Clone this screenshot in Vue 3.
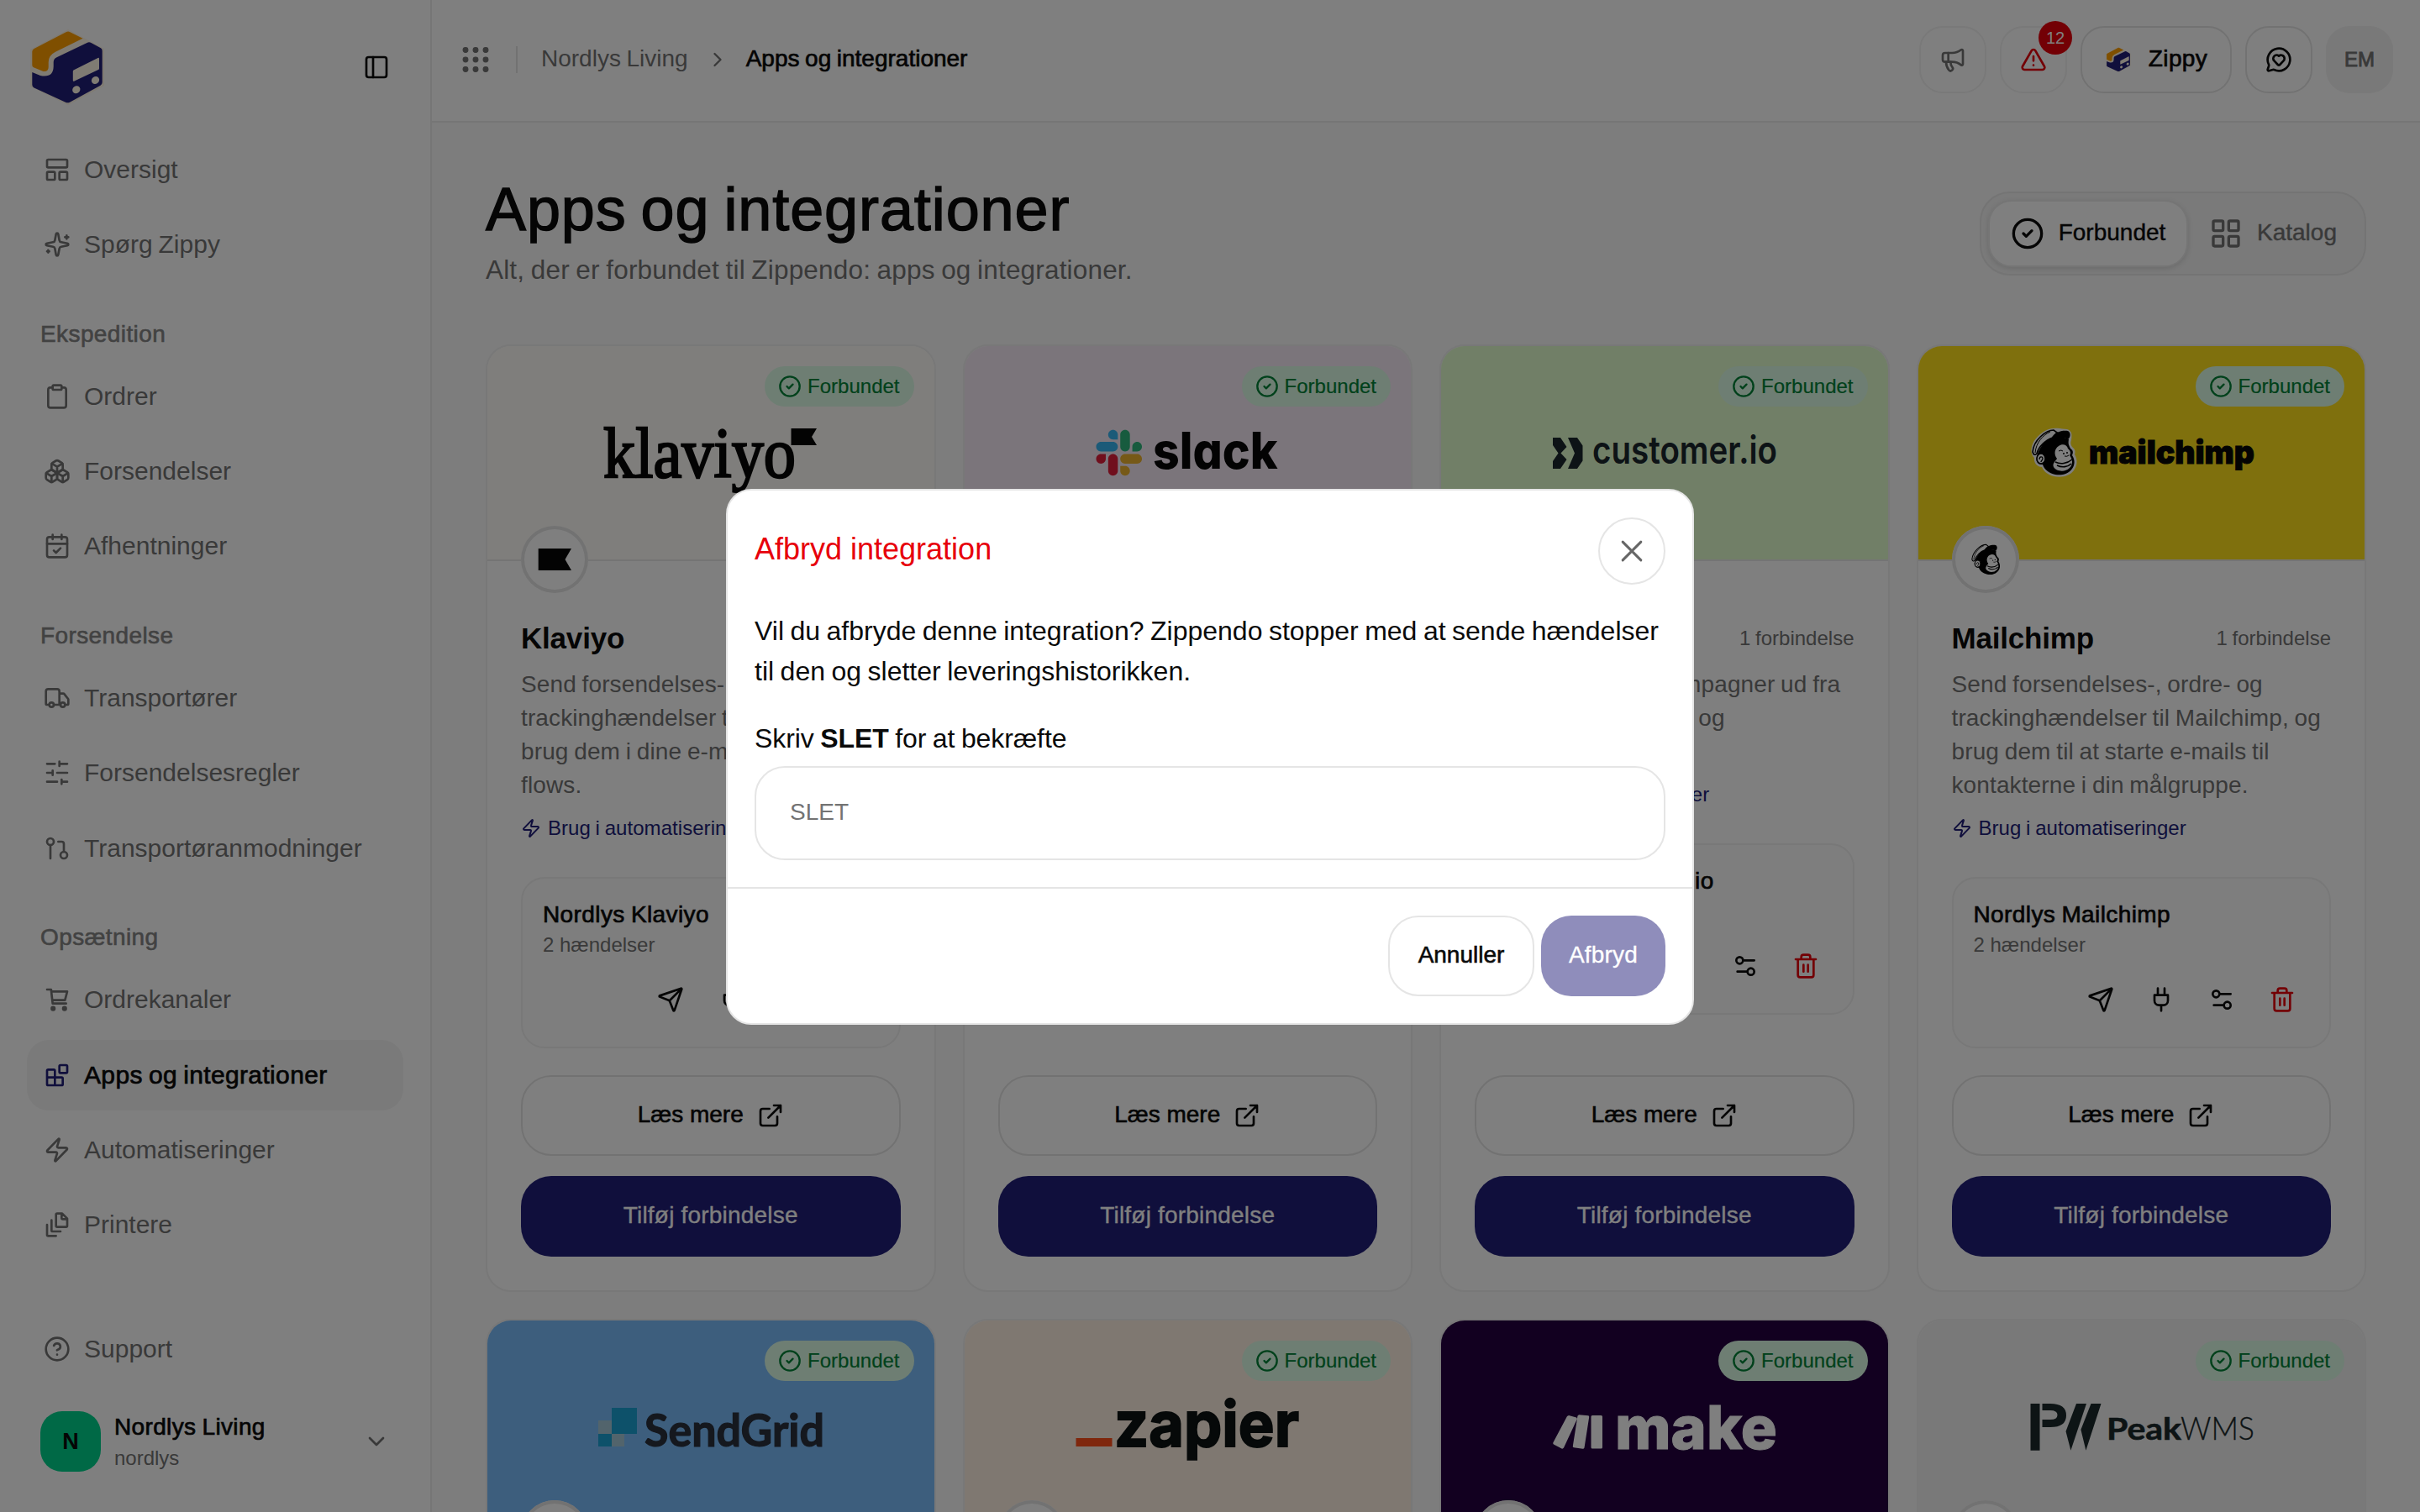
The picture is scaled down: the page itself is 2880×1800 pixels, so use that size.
<script setup>
import { h } from 'vue'

const icons = {
  panel: '<rect width="18" height="18" x="3" y="3" rx="2"/><path d="M9 3v18"/>',
  dashboard: '<rect width="18" height="7" x="3" y="3" rx="1"/><rect width="7" height="7" x="3" y="14" rx="1"/><rect width="7" height="7" x="14" y="14" rx="1"/>',
  sparkles: '<path d="M11.017 2.814a1 1 0 0 1 1.966 0l1.051 5.558a2 2 0 0 0 1.594 1.594l5.558 1.051a1 1 0 0 1 0 1.966l-5.558 1.051a2 2 0 0 0-1.594 1.594l-1.051 5.558a1 1 0 0 1-1.966 0l-1.051-5.558a2 2 0 0 0-1.594-1.594l-5.558-1.051a1 1 0 0 1 0-1.966l5.558-1.051a2 2 0 0 0 1.594-1.594z"/><path d="M20.500 4v3M22 5.500h-3M4 17.200v2M5 18.200H3"/>',
  clipboard: '<rect width="8" height="4" x="8" y="2" rx="1"/><path d="M16 4h2a2 2 0 0 1 2 2v14a2 2 0 0 1-2 2H6a2 2 0 0 1-2-2V6a2 2 0 0 1 2-2h2"/>',
  boxes: '<path d="M2.970 12.920A2 2 0 0 0 2 14.630v3.240a2 2 0 0 0 .970 1.710l3 1.800a2 2 0 0 0 2.060 0L12 19v-5.500l-5-3-4.030 2.420Z"/><path d="m7 16.500-4.740-2.850M7 16.500l5-3M7 16.500v5.170"/><path d="M12 13.500V19l3.970 2.380a2 2 0 0 0 2.060 0l3-1.800a2 2 0 0 0 .970-1.710v-3.240a2 2 0 0 0-.970-1.710L17 10.500l-5 3Z"/><path d="m17 16.500-5-3M17 16.500l4.740-2.850M17 16.500v5.170"/><path d="M7.970 4.420A2 2 0 0 0 7 6.130v4.370l5 3 5-3V6.130a2 2 0 0 0-.970-1.710l-3-1.800a2 2 0 0 0-2.060 0l-3 1.800Z"/><path d="M12 8 7.260 5.150M12 8l4.740-2.850M12 13.500V8"/>',
  calendar: '<path d="M8 2v4M16 2v4"/><rect width="18" height="18" x="3" y="4" rx="2"/><path d="M3 10h18M9 16l2 2 4-4"/>',
  truck: '<path d="M14 18V6a2 2 0 0 0-2-2H4a2 2 0 0 0-2 2v11a1 1 0 0 0 1 1h2M15 18H9M19 18h2a1 1 0 0 0 1-1v-3.650a1 1 0 0 0-.220-.624l-3.480-4.350A1 1 0 0 0 17.520 8H14"/><circle cx="17" cy="18" r="2"/><circle cx="7" cy="18" r="2"/>',
  sliders: '<path d="M21 4h-7M10 4H3M21 12h-9M8 12H3M21 20h-5M12 20H3M14 2v4M8 10v4M16 18v4"/>',
  request: '<circle cx="18" cy="18" r="3"/><circle cx="6" cy="6" r="3"/><path d="M13 6h3a2 2 0 0 1 2 2v7M6 9v12"/>',
  cart: '<path d="M3 3h3.600L8 15.500h12M7 4.800h14l-2 7.700H8"/><circle cx="8.400" cy="20" r="1.300" fill="currentColor"/><circle cx="18.600" cy="20" r="1.300" fill="currentColor"/>',
  blocks: '<rect width="7" height="7" x="14" y="3" rx="1"/><path d="M10 21V8a1 1 0 0 0-1-1H4a1 1 0 0 0-1 1v12a1 1 0 0 0 1 1h12a1 1 0 0 0 1-1v-5a1 1 0 0 0-1-1H3"/>',
  zap: '<path d="M4 14a1 1 0 0 1-.780-1.630l9.900-10.200a.5.5 0 0 1 .860.460l-1.920 6.020A1 1 0 0 0 13 10h7a1 1 0 0 1 .780 1.630l-9.900 10.200a.5.5 0 0 1-.860-.460l1.920-6.020A1 1 0 0 0 11 14z"/>',
  files: '<path d="M16.500 2H12a1 1 0 0 0-1 1v10a1 1 0 0 0 1 1h8a1 1 0 0 0 1-1V6.500zM16 2v4a1 1 0 0 0 1 1h4M15 18H8a1 1 0 0 1-1-1V8M11 22H4a1 1 0 0 1-1-1v-9"/>',
  help: '<circle cx="12" cy="12" r="10"/><path d="M9.090 9a3 3 0 0 1 5.830 1c0 2-3 3-3 3M12 17h.010"/>',
  down: '<path d="m6 9 6 6 6-6"/>',
  right: '<path d="m9 18 6-6-6-6"/>',
  dots: '<g fill="currentColor"><circle cx="3" cy="3.400" r="2.200"/><circle cx="12" cy="3.400" r="2.200"/><circle cx="21" cy="3.400" r="2.200"/><circle cx="3" cy="12" r="2.200"/><circle cx="12" cy="12" r="2.200"/><circle cx="21" cy="12" r="2.200"/><circle cx="3" cy="20.600" r="2.200"/><circle cx="12" cy="20.600" r="2.200"/><circle cx="21" cy="20.600" r="2.200"/></g>',
  megaphone: '<path d="M11 6a13 13 0 0 0 8.400-2.800A1 1 0 0 1 21 4v12a1 1 0 0 1-1.600.8A13 13 0 0 0 11 14H5a2 2 0 0 1-2-2V8a2 2 0 0 1 2-2z"/><path d="M6 14a12 12 0 0 0 2.400 7.200 2 2 0 0 0 3.200-2.400A8 8 0 0 1 10 14M8 6v8"/>',
  alert: '<path d="m21.730 18-8-14a2 2 0 0 0-3.480 0l-8 14A2 2 0 0 0 4 21h16a2 2 0 0 0 1.730-3M12 9v4M12 17h.010"/>',
  chat: '<path d="M2.992 16.342a2 2 0 0 1 .094 1.167l-1.065 3.290a1 1 0 0 0 1.236 1.168l3.413-.998a2 2 0 0 1 1.099.092 10 10 0 1 0-4.777-4.719"/><path d="M7.828 13.070A3 3 0 0 1 12 8.764a3 3 0 0 1 5.004 2.224 3 3 0 0 1-.832 2.083l-3.447 3.620a1 1 0 0 1-1.450-.001z"/>',
  check: '<circle cx="12" cy="12" r="10"/><path d="m9 12 2 2 4-4"/>',
  grid: '<rect width="7" height="7" x="3" y="3" rx="1"/><rect width="7" height="7" x="14" y="3" rx="1"/><rect width="7" height="7" x="14" y="14" rx="1"/><rect width="7" height="7" x="3" y="14" rx="1"/>',
  send: '<path d="M14.536 21.686a.5.5 0 0 0 .937-.024l6.500-19a.496.496 0 0 0-.635-.635l-19 6.500a.5.5 0 0 0-.024.937l7.930 3.180a2 2 0 0 1 1.112 1.110zM21.854 2.147l-10.940 10.939"/>',
  plug: '<path d="M12 22v-5M9 8V2M15 8V2M18 8v5a4 4 0 0 1-4 4h-4a4 4 0 0 1-4-4V8Z"/>',
  tune: '<path d="M20 7h-9M14 17H5"/><circle cx="17" cy="17" r="3"/><circle cx="7" cy="7" r="3"/>',
  trash: '<path d="M3 6h18M19 6v14a2 2 0 0 1-2 2H7a2 2 0 0 1-2-2V6M8 6V4a2 2 0 0 1 2-2h4a2 2 0 0 1 2 2v2M10 11v6M14 11v6"/>',
  external: '<path d="M15 3h6v6M10 14 21 3M18 13v6a2 2 0 0 1-2 2H5a2 2 0 0 1-2-2V8a2 2 0 0 1 2-2h6"/>',
  close: '<path d="M18.500 5.500l-13 13M5.500 5.500l13 13"/>',
}

const Icon = (props) =>
  h('svg', {
    width: props.size || 32,
    height: props.size || 32,
    viewBox: '0 0 24 24',
    fill: 'none',
    stroke: 'currentColor',
    'stroke-width': props.stroke || 2,
    'stroke-linecap': 'round',
    'stroke-linejoin': 'round',
    innerHTML: icons[props.name],
  })
Icon.props = ['name', 'size', 'stroke']

const boxMark =
  '<path d="M49 3 92 26V70L49 93 4 71V27Z" fill="#fff6e6"/>' +
  '<path d="M46.500 6.300Q49 5 51.500 6.200L66.500 13.800 34 29.800Q25.700 34 25.700 42V48Q25.500 53.800 19.500 53L8 48.300Q6.300 47.500 6.300 45.500V29.500Q6.300 27 8.500 26Z" fill="#ff9f00"/>' +
  '<path d="M71.500 19Q74 17.600 76.500 19L88 25.200Q89.700 26 89.700 28.500V66Q89.700 68.500 87.500 69.700L51 89.700Q48.500 91 46 89.700L8.500 72.500Q6.300 71.300 6.300 69V54L16 58Q31.500 61 31.700 47V42Q31.700 38 35.500 36.200Z" fill="#211e79"/>' +
  '<path d="M55.500 51.500 84.500 37Q86 36.200 86 38V49.500Q86 50.500 85 51L56.500 64.500Q54.800 65.200 54.800 63.500V53Q54.800 52 55.500 51.500Z" fill="#fff6e6"/>' +
  '<ellipse cx="58.800" cy="74.800" rx="4.800" ry="4.300" transform="rotate(-35 58.800 74.800)" fill="#fff6e6"/><ellipse cx="81.500" cy="63.500" rx="4.800" ry="4.300" transform="rotate(-35 81.500 63.500)" fill="#fff6e6"/>'

const monkeyBody =
  '<path d="M20 13C28 8 40 10 45 13 44 18 45 20 47 24 51 27 50 29 49 32 53 38 52 44 49 48 44 55 36 56 29 55 21 53 16 49 14 43 8 44 5 38 7 33 9 26 14 17 20 13Z" fill="#000"/>' +
  '<path d="M27 2C18 2 3 14 2 28 3 32 5 32 7 30 9 22 17 14 26 11L31 5Z" fill="#fff" stroke="#000" stroke-width="1.600"/><path d="M23 4C14 8 6 17 5 29" fill="none" stroke="#000" stroke-width="1"/>' +
  '<path d="M24 12C28 4 37 2 44 3 48 5 47 11 44 13 38 10 32 12 24 12Z" fill="#000"/>' +
  '<path d="M33 21C37 18 43 19 44 24 47 27 48 29 46 32 50 37 50 43 46 47 40 53 30 51 27 46 25 42 29 39 31 36 27 31 28 24 33 21Z" fill="#fff"/>' +
  '<ellipse cx="12" cy="36" rx="5" ry="6" fill="#fff" stroke="#000" stroke-width="1.500"/><path d="M10 37C10 33 14 33 14 36 14 38 12 38 12 40" fill="none" stroke="#000" stroke-width="1.300"/>' +
  '<path d="M29 40C35 43 43 42 49 37M31 44C37 47 44 46 48 42" fill="none" stroke="#000" stroke-width="1.600"/><circle cx="39" cy="30" r="1" fill="#000"/><circle cx="43" cy="29" r="1" fill="#000"/><path d="M33 27q3-2 5 0M40 33q3 1 5-1" fill="none" stroke="#000" stroke-width="1"/>'
const monkeyRim =
  '<path d="M27 0C34-1 38 1 43 1 49 3 49 7 48 14 47 17 47 19 49 22 53 25 53 28 52 31 56 38 55 44 51 50 46 57 36 59 27 57 20 55 15 51 13 46 7 46 3 40 4 35-1 31-1 20 6 12 12 5 19 0 27 0Z" fill="#fff"/>'

const word = (x, y, size, width, weight, color, text, extra = '') =>
  `<text x="${x}" y="${y}" font-size="${size}" font-weight="${weight}" fill="${color}" textLength="${width}" lengthAdjust="spacingAndGlyphs" ${extra}>${text}</text>`

const logos = {
  klaviyo:
    word(138, 156.4, 85, 229, 400, '#060606', 'klaviyo', 'font-family="Liberation Serif, serif" stroke="#060606" stroke-width="2.400"') +
    '<path d="M361.500 98H392L386 108 392 118H361.500Z" fill="#060606"/>',
  slack:
    '<g transform="translate(156.500 99.700) scale(.444)"><path d="M25.800 77.600c0 7.100-5.800 12.900-12.900 12.900S0 84.700 0 77.600s5.800-12.900 12.900-12.900h12.900zm6.500 0c0-7.100 5.800-12.900 12.900-12.900s12.900 5.800 12.900 12.900v32.300c0 7.100-5.800 12.900-12.900 12.900s-12.900-5.800-12.900-12.900z" fill="#e01e3a"/><path d="M45.200 25.800c-7.100 0-12.900-5.800-12.900-12.900S38.100 0 45.200 0s12.900 5.800 12.900 12.900v12.900zm0 6.500c7.100 0 12.900 5.800 12.900 12.900s-5.800 12.900-12.900 12.900H12.900C5.800 58.100 0 52.300 0 45.200s5.800-12.900 12.900-12.900z" fill="#36b5f0"/><path d="M97 45.200c0-7.100 5.800-12.900 12.900-12.900s12.900 5.800 12.900 12.900-5.800 12.900-12.900 12.900H97zm-6.500 0c0 7.100-5.800 12.900-12.900 12.900s-12.900-5.800-12.900-12.900V12.900C64.700 5.800 70.500 0 77.600 0s12.900 5.800 12.900 12.900z" fill="#2eb67d"/><path d="M77.600 97c7.100 0 12.900 5.800 12.900 12.900s-5.800 12.900-12.900 12.900-12.900-5.800-12.900-12.900V97zm0-6.500c-7.100 0-12.900-5.800-12.900-12.900s5.800-12.900 12.900-12.900h32.300c7.100 0 12.900 5.800 12.900 12.900s-5.800 12.900-12.900 12.900z" fill="#ecb22e"/></g>' +
    word(224, 145.7, 60, 148.5, 800, '#060606', 'slack', 'style="font-feature-settings:\'cv11\'"'),
  customer:
    '<path d="M133 109H142L149.500 120 142.500 127.500 149.500 135 142 146H133V137L139.500 127.500 133 118ZM151 109H162L168.500 118.500V136.500L162 146H151L159 127.500Z" fill="#1b262d"/>' +
    word(180, 139.7, 45, 220, 600, '#1b262d', 'customer.io'),
  mailchimp:
    `<g transform="translate(134 98)">${monkeyRim}${monkeyBody}</g>` +
    word(203, 140, 38, 197, 900, '#060606', 'mailchimp', 'stroke="#060606" stroke-width="1"'),
  sendgrid:
    '<path d="M148 104H178V135H148ZM132 135H148V150H132Z" fill="#1aa3d4"/><path d="M132 119H148V135H132ZM148 135H163V150H148Z" fill="#a5c9d8"/>' +
    word(187, 150, 53, 214, 700, '#2a303c', 'SendGrid', 'font-family="Lato, sans-serif" stroke="#2a303c" stroke-width="1.200"'),
  zapier:
    '<path d="M132.500 140H175.500V150H132.500Z" fill="#ff4f1a"/>' + word(178, 150, 75, 220, 700, '#0c1212', 'zapier', 'stroke="#0c1212" stroke-width="2"'),
  make:
    '<path d="M152 113 161 115.500Q162 116 161.800 117.500L146 151.500Q145 153 143.500 152.500L134 147.500Q133 147 133.300 145.500L150 114ZM164 112.300 175 113.300Q176.500 113.500 176.200 115L170.500 151.500Q170 153 168.500 152.800L158 151.300Q156.500 151 156.800 149.500L162.500 113.500ZM180 113H190.500Q192 113 192 114.500V151Q192 152.500 190.500 152.500H180Q178.500 152.500 178.500 151V114.500Q178.500 113 180 113Z" fill="#fff"/>' +
    word(207, 152.5, 71, 193, 800, '#fff', 'make', 'stroke="#fff" stroke-width="1"'),
  peak:
    '<path d="M133.500 99H144.500V154.700H133.500ZM147.500 99H157Q176 99 176 113T157 127H147.500V118H157Q165.500 118 165.500 112.500T157 107H147.500ZM188 99H200L181.400 154.700 175.500 132ZM205.500 99H217.500L199.400 154.700 193.400 130Z" fill="#1b292b"/>' +
    word(224, 141.7, 36.5, 89, 700, '#1b292b', 'Peak', 'font-family="Lato, sans-serif" stroke="#1b292b" stroke-width=".6"') +
    word(312, 141.7, 36.5, 88, 300, '#1b292b', 'WMS', 'font-family="Lato, sans-serif" stroke="#1b292b" stroke-width=".3"'),
}

const nav = [
  { items: [['dashboard', 'Oversigt'], ['sparkles', 'Spørg Zippy']] },
  { title: 'Ekspedition', items: [['clipboard', 'Ordrer'], ['boxes', 'Forsendelser'], ['calendar', 'Afhentninger']] },
  { title: 'Forsendelse', items: [['truck', 'Transportører'], ['sliders', 'Forsendelsesregler'], ['request', 'Transportøranmodninger']] },
  { title: 'Opsætning', items: [['cart', 'Ordrekanaler'], ['blocks', 'Apps og integrationer'], ['zap', 'Automatiseringer'], ['files', 'Printere']] },
]

const cards = [
  {
    id: 'klaviyo', name: 'Klaviyo', conn: 'Nordlys Klaviyo',
    lines: ['Send forsendelses-, ordre- og', 'trackinghændelser til Klaviyo, og', 'brug dem i dine e-mail- og sms-', 'flows.'],
    mark: '<path d="M20.700 27H60L52.500 40 60 53H20.700Z" fill="#060606"/>',
  },
  { id: 'slack', actions: true },
  {
    id: 'customer', name: 'Customer.io', conn: 'Nordlys Customer.io',
    lines: ['Byg beskeder og kampagner ud fra', 'forsendelses-, ordre- og', 'trackinghændelser.'],
    mark: '',
  },
  {
    id: 'mailchimp', name: 'Mailchimp', conn: 'Nordlys Mailchimp',
    lines: ['Send forsendelses-, ordre- og', 'trackinghændelser til Mailchimp, og', 'brug dem til at starte e-mails til', 'kontakterne i din målgruppe.'],
    mark: `<g transform="translate(22.500 21) scale(.67)">${monkeyBody}</g>`,
  },
  { id: 'sendgrid' },
  { id: 'zapier' },
  { id: 'make' },
  { id: 'peak' },
]
</script>

<template>
  <div class="app">
    <aside class="sidebar">
      <div class="brand">
        <svg class="brand-mark" viewBox="0 0 96 96" v-html="boxMark"></svg>
        <Icon name="panel" />
      </div>
      <nav class="nav">
        <template v-for="(group, i) in nav" :key="i">
          <div v-if="group.title" class="nav-title">{{ group.title }}</div>
          <a v-for="[icon, label] in group.items" :key="label" class="nav-item" :class="{ active: icon === 'blocks' }">
            <Icon :name="icon" /><span>{{ label }}</span>
          </a>
        </template>
      </nav>
      <div class="side-foot">
        <a class="nav-item"><Icon name="help" /><span>Support</span></a>
        <div class="account">
          <div class="account-logo">N</div>
          <div class="account-text">
            <div class="account-name">Nordlys Living</div>
            <div class="account-slug">nordlys</div>
          </div>
          <Icon name="down" />
        </div>
      </div>
    </aside>

    <div class="page">
      <header class="topbar">
        <Icon class="muted dots" name="dots" stroke="0.8" />
        <i class="sep"></i>
        <span class="crumb muted">Nordlys Living</span>
        <Icon class="chev muted" name="right" size="28" />
        <span class="crumb medium here">Apps og integrationer</span>
        <div class="actions">
          <button class="sq soft muted"><Icon name="megaphone" /></button>
          <button class="sq soft danger"><Icon name="alert" /><b class="count">12</b></button>
          <button class="zippy"><svg width="32" height="32" viewBox="0 0 96 96" v-html="boxMark"></svg><span>Zippy</span></button>
          <button class="sq"><Icon name="chat" /></button>
          <div class="sq me">EM</div>
        </div>
      </header>

      <main class="content">
        <div class="heading">
          <div>
            <h1>Apps og integrationer</h1>
            <p class="lead">Alt, der er forbundet til Zippendo: apps og integrationer.</p>
          </div>
          <div class="segmented">
            <div class="seg on"><Icon name="check" size="40" /><span>Forbundet</span></div>
            <div class="seg"><Icon name="grid" size="40" /><span>Katalog</span></div>
          </div>
        </div>

        <div class="cards">
          <article v-for="card in cards" :key="card.id" class="card">
            <div class="banner" :class="card.id">
              <svg class="logo" viewBox="0 0 532 254" v-html="logos[card.id]"></svg>
              <div class="status"><Icon name="check" size="28" /><span>Forbundet</span></div>
              <div class="avatar"><svg viewBox="0 0 80 80" v-html="card.mark || ''"></svg></div>
            </div>
            <div v-if="card.name || card.actions" class="body">
              <template v-if="card.name">
                <div class="title-row">
                  <h2>{{ card.name }}</h2>
                  <span class="small muted">1 forbindelse</span>
                </div>
                <p class="desc"><span v-for="line in card.lines" :key="line">{{ line }}</span></p>
                <a class="auto"><Icon name="zap" size="24" /><span>Brug i automatiseringer</span></a>
                <div class="conn">
                  <div class="conn-name">{{ card.conn }}</div>
                  <div class="conn-sub">2 hændelser</div>
                  <div class="tools">
                    <span><Icon name="send" /></span>
                    <span><Icon name="plug" /></span>
                    <span><Icon name="tune" /></span>
                    <span class="danger"><Icon name="trash" /></span>
                  </div>
                </div>
              </template>
              <div class="buttons">
                <button class="btn outline"><span>Læs mere</span><Icon name="external" /></button>
                <button class="btn solid"><span>Tilføj forbindelse</span></button>
              </div>
            </div>
          </article>
        </div>
      </main>
    </div>

    <div class="overlay">
      <section class="modal">
        <div class="modal-main">
          <div class="modal-head">
            <h3>Afbryd integration</h3>
            <button class="close"><Icon name="close" size="40" stroke="1.8" /></button>
          </div>
          <p class="modal-text">Vil du afbryde denne integration? Zippendo stopper med at sende hændelser<br />til den og sletter leveringshistorikken.</p>
          <div class="field">
            <label>Skriv <b>SLET</b> for at bekræfte</label>
            <input placeholder="SLET" />
          </div>
        </div>
        <div class="modal-foot">
          <button class="btn outline cancel"><span>Annuller</span></button>
          <button class="btn solid confirm"><span>Afbryd</span></button>
        </div>
      </section>
    </div>
  </div>
</template>

<style>
html,
body {
  margin: 0;
  overflow: hidden;
}
</style>

<style scoped>
* {
  box-sizing: border-box;
}
svg {
  flex: none;
  display: block;
}
h1, h2, h3, p {
  margin: 0;
}
button, input {
  font: inherit;
  color: inherit;
  background: none;
  border: 0;
  padding: 0;
  margin: 0;
}
.app {
  width: 2880px;
  height: 1800px;
  overflow: hidden;
  display: flex;
  position: relative;
  background: #fafafa;
  color: #0a0a0a;
  font-family: "Liberation Sans", Arial, sans-serif;
  font-size: 28px;
}
.muted {
  color: #737373;
}
.danger {
  color: #e7000b;
}
.medium {
  -webkit-text-stroke: 0.7px currentColor;
}

.sidebar {
  width: 514px;
  flex: none;
  border-right: 2px solid #ececec;
  background: #fff;
  display: flex;
  flex-direction: column;
}
.brand {
  height: 160px;
  padding: 32px 48px 32px 32px;
  display: flex;
  align-items: center;
  justify-content: space-between;
}
.brand-mark {
  width: 96px;
  height: 96px;
}
.nav {
  flex: 1;
  padding: 0 32px;
}
.nav-item {
  height: 84px;
  margin-bottom: 5.3px;
  padding: 0 20px;
  display: flex;
  align-items: center;
  gap: 16px;
  border-radius: 26px;
  font-size: 30px;
  word-spacing: -1.5px;
  color: #737373;
}
.nav-item.active {
  background: #f4f4f4;
  color: #0a0a0a;
  letter-spacing: 0.35px;
  -webkit-text-stroke: 0.7px currentColor;
}
.nav-item.active svg {
  color: #211e79;
}
.nav-title {
  height: 91.300px;
  padding: 27px 16px 0;
  display: flex;
  align-items: center;
  color: #858585;
  letter-spacing: 0.4px;
  -webkit-text-stroke: 0.6px currentColor;
}
.side-foot {
  padding: 0 32px 48px;
}
.side-foot .nav-item {
  margin-bottom: 32px;
}
.account {
  height: 72px;
  padding: 0 16px;
  display: flex;
  align-items: center;
  gap: 16px;
}
.account > svg {
  margin-left: auto;
  color: #737373;
}
.account-logo {
  width: 72px;
  height: 72px;
  border-radius: 26px;
  background: #00d28c;
  display: flex;
  align-items: center;
  justify-content: center;
  font-size: 27px;
  font-weight: 700;
}
.account-name {
  margin-top: -2px;
  line-height: 40px;
  letter-spacing: 0.35px;
  word-spacing: -1px;
  -webkit-text-stroke: 0.7px currentColor;
}
.account-slug {
  padding-top: 1px;
  font-size: 24px;
  line-height: 32px;
  color: #737373;
}

.page {
  flex: 1;
  min-width: 0;
}
.topbar {
  height: 146px;
  padding: 0 32px 2px 36px;
  display: flex;
  align-items: center;
  background: #fff;
  border-bottom: 2px solid #ececec;
}
.dots {
  overflow: visible;
}
.sep {
  width: 2px;
  height: 32px;
  margin: 0 28px 0 32px;
  background: #e5e5e5;
}
.crumb {
  padding-bottom: 2px;
  letter-spacing: 0;
  word-spacing: -1.200px;
}
.chev {
  margin: 0 20px 0 21px;
}
.actions {
  margin-left: auto;
  display: flex;
  gap: 16px;
}
.sq,
.zippy {
  width: 80px;
  height: 80px;
  border: 2px solid #e5e5e5;
  border-radius: 28px;
  display: flex;
  align-items: center;
  justify-content: center;
  position: relative;
}
.soft {
  border-color: #f2f2f2;
}
.zippy {
  width: 180px;
  gap: 20px;
}
.zippy span {
  padding-bottom: 2px;
  letter-spacing: 0.4px;
  -webkit-text-stroke: 0.7px currentColor;
}
.me {
  border: 0;
  background: #f2f2f2;
  color: #737373;
  font-size: 24px;
  -webkit-text-stroke: 0.9px currentColor;
}
.count {
  position: absolute;
  top: -8px;
  right: -8px;
  width: 40px;
  height: 40px;
  border-radius: 50%;
  background: #e7000b;
  color: #fff;
  font-size: 20px;
  font-weight: 400;
  line-height: 41px;
  text-align: center;
}

.content {
  padding: 0 64px;
}
.heading {
  height: 264px;
  display: flex;
  justify-content: space-between;
  align-items: flex-start;
}
h1 {
  padding-top: 58px;
  font-size: 72px;
  font-weight: 400;
  line-height: 90px;
  letter-spacing: 0.9px;
  word-spacing: -4px;
  -webkit-text-stroke: 1.400px currentColor;
}
.lead {
  margin-top: 3px;
  font-size: 31.500px;
  line-height: 48px;
  letter-spacing: 0.18px;
  word-spacing: -1.400px;
  color: #737373;
}
.segmented {
  margin-top: 82px;
  width: 460px;
  height: 100px;
  padding: 8px;
  border: 2px solid #e8e8e8;
  border-radius: 36px;
  background: #f4f4f4;
  display: flex;
}
.seg {
  flex: 1;
  display: flex;
  align-items: center;
  justify-content: center;
  gap: 17px;
  color: #737373;
}
.seg.on {
  flex: 0 0 238px;
  height: 80px;
  border: 2px solid #ebebeb;
  border-radius: 28px;
  background: #fff;
  color: #0a0a0a;
  box-shadow: 0 2px 6px rgba(0, 0, 0, 0.12);
}
.seg span {
  padding-bottom: 3px;
  -webkit-text-stroke: 0.4px currentColor;
}

.cards {
  display: grid;
  grid-template-columns: repeat(4, minmax(0, 1fr));
  grid-auto-rows: 1128px;
  gap: 32px;
}
.card {
  border: 2px solid #f0f0f0;
  border-radius: 30px;
  background: #fff;
  overflow: hidden;
  display: flex;
  flex-direction: column;
}
.banner {
  height: 256px;
  flex: none;
  border-bottom: 2px solid #e8e8e8;
  position: relative;
}
.logo {
  width: 532px;
  height: 254px;
  font-family: Inter, sans-serif;
}
.klaviyo { background: #fffdf8; }
.slack { background: #f6eaf6; }
.customer { background: #e2ffcf; }
.mailchimp { background: #ffe01b; }
.sendgrid { background: #7abcfa; }
.zapier { background: #fff1e3; }
.make { background: #250140; }
.peak { background: #f2f2f2; }
.status {
  position: absolute;
  top: 24px;
  right: 24px;
  height: 48px;
  padding: 0 17px 0 16px;
  border-radius: 24px;
  background: #dcfce7;
  color: #008236;
  display: flex;
  align-items: center;
  gap: 7px;
  font-size: 24px;
  -webkit-text-stroke: 0.2px currentColor;
}
.avatar {
  position: absolute;
  left: 40px;
  top: 214px;
  width: 80px;
  height: 80px;
  border-radius: 50%;
  background: #fff;
  box-shadow: inset 0 0 0 4px #e5e5e5;
}
.body {
  flex: 1;
  padding: 68px 40px 40px;
  display: flex;
  flex-direction: column;
}
.title-row {
  height: 48px;
  display: flex;
  align-items: center;
  justify-content: space-between;
}
h2 {
  font-size: 35px;
  font-weight: 700;
  letter-spacing: -0.2px;
}
.small {
  font-size: 24px;
  letter-spacing: 0;
  word-spacing: -1px;
}
.desc {
  margin-top: 11px;
  line-height: 40px;
  letter-spacing: 0.12px;
  word-spacing: -1.200px;
  color: #737373;
}
.desc span {
  display: block;
  white-space: nowrap;
}
.auto {
  margin-top: 15px;
  height: 32px;
  display: flex;
  align-items: center;
  gap: 8px;
  color: #211e79;
  font-size: 24px;
  letter-spacing: 0.05px;
  word-spacing: -1px;
}
.conn {
  margin-top: 42px;
  height: 204px;
  padding: 24px;
  border: 2px solid #f0f0f0;
  border-radius: 28px;
  background: #fcfcfc;
}
.conn-name {
  margin-top: -1px;
  line-height: 40px;
  letter-spacing: 0.4px;
  word-spacing: -1px;
  -webkit-text-stroke: 0.7px currentColor;
}
.conn-sub {
  font-size: 24px;
  line-height: 32px;
  color: #737373;
}
.tools {
  margin-top: 17px;
  display: flex;
  justify-content: flex-end;
  gap: 8px;
}
.tools span {
  width: 64px;
  height: 64px;
  display: flex;
  align-items: center;
  justify-content: center;
}
.buttons {
  margin-top: auto;
  display: flex;
  flex-direction: column;
  gap: 24px;
}
.btn {
  height: 96px;
  border-radius: 36px;
  display: flex;
  align-items: center;
  justify-content: center;
  gap: 16px;
}
.btn span {
  padding-bottom: 3px;
  -webkit-text-stroke: 0.6px currentColor;
}
.outline {
  border: 2px solid #e5e5e5;
}
.solid {
  background: #211e79;
  color: #fff;
}
.solid span {
  letter-spacing: 0.2px;
  -webkit-text-stroke: 0.3px currentColor;
}

.overlay {
  position: absolute;
  inset: 0;
  background: rgba(0, 0, 0, 0.5);
  display: flex;
  align-items: center;
  justify-content: center;
}
.modal {
  width: 1152px;
  height: 638px;
  margin-top: 2px;
  border: 2px solid #e5e5e5;
  border-radius: 30px;
  background: #fff;
}
.modal-main {
  padding: 32px;
}
.modal-head {
  height: 80px;
  display: flex;
  justify-content: space-between;
  align-items: center;
}
h3 {
  font-size: 36px;
  font-weight: 400;
  padding-bottom: 4px;
  color: #e7000b;
}
.close {
  width: 80px;
  height: 80px;
  border: 2px solid #e5e5e5;
  border-radius: 50%;
  color: #666;
  display: flex;
  align-items: center;
  justify-content: center;
}
.modal-text {
  margin-top: 31px;
  font-size: 32px;
  line-height: 48px;
  word-spacing: -1.400px;
  white-space: nowrap;
}
.field {
  margin-top: 32px;
}
label {
  display: block;
  font-size: 32px;
  line-height: 48px;
  letter-spacing: -0.1px;
  word-spacing: -1.200px;
}
input {
  display: block;
  width: 100%;
  height: 112px;
  margin-top: 9px;
  padding: 0 40px 2px;
  border: 2px solid #e5e5e5;
  border-radius: 36px;
}
input::placeholder {
  color: #737373;
  opacity: 1;
}
.modal-foot {
  border-top: 2px solid #e5e5e5;
  padding: 32px;
  display: flex;
  justify-content: flex-end;
  gap: 8px;
}
.cancel {
  width: 174px;
}
.confirm {
  width: 148px;
  opacity: 0.5;
}
</style>
